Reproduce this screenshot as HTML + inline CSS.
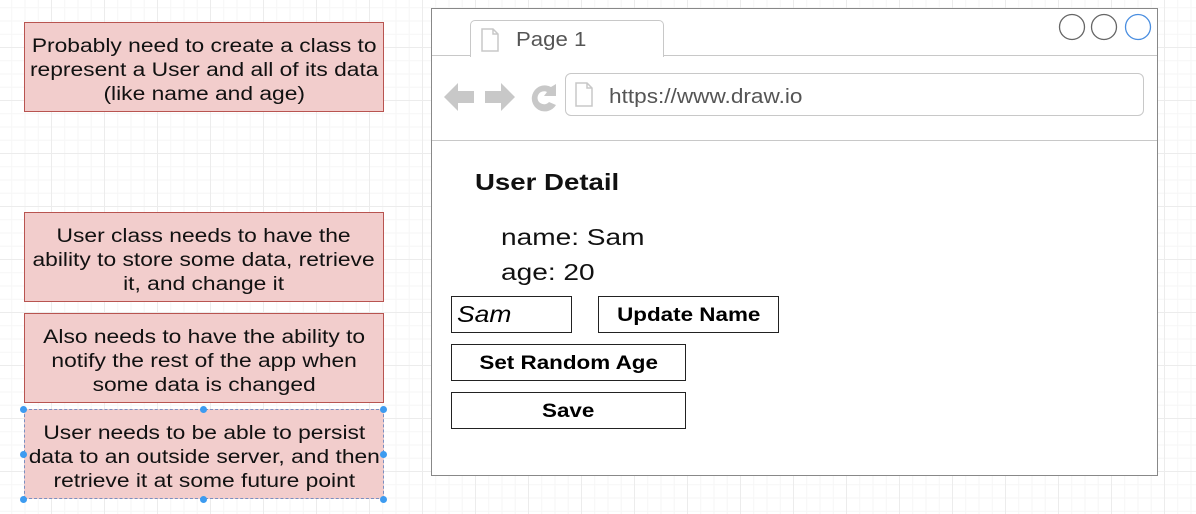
<!DOCTYPE html>
<html><head><style>
body{margin:0;width:1196px;height:514px;overflow:hidden;position:relative;font-family:"Liberation Sans",sans-serif;
background-color:#fff;
background-image:linear-gradient(#ececec 1px,transparent 1px),linear-gradient(90deg,#ececec 1px,transparent 1px),linear-gradient(#f6f6f6 1px,transparent 1px),linear-gradient(90deg,#f6f6f6 1px,transparent 1px);
background-size:53px 53px,53px 53px,13.25px 13.25px,13.25px 13.25px;background-position:0 -6px,-2px 0,0 -6px,-2px 0;}
.n{position:absolute;left:24px;width:358px;background:#f2cdcc;border:1px solid #b85450;display:flex;align-items:center;justify-content:center;text-align:center;font-size:19px;line-height:24px;color:#111;padding-top:8px;box-sizing:content-box;height:80px}
.n span{display:inline-block;transform:scaleX(1.2);white-space:nowrap}
.br{position:absolute;left:431px;top:8px;width:725px;height:466px;background:#fff;border:1px solid #888;}
.a{position:absolute;white-space:nowrap}
.s{transform-origin:0 0;}
.btn{position:absolute;border:1.5px solid #222;box-sizing:border-box;font-weight:bold;font-size:19px;display:flex;align-items:center;justify-content:center;background:#fff;padding-top:3px}
.btn span{display:inline-block;transform:scaleX(1.18)}
.h{position:absolute;width:7px;height:7px;border-radius:50%;background:#3d9bf0;}
</style></head><body>
<div class="n" style="top:22px"><span>Probably need to create a class to<br>represent a User and all of its data<br>(like name and age)</span></div>
<div class="n" style="top:212px"><span>User class needs to have the<br>ability to store some data, retrieve<br>it, and change it</span></div>
<div class="n" style="top:313px"><span>Also needs to have the ability to<br>notify the rest of the app when<br>some data is changed</span></div>
<div class="n" style="top:409px;border:1px dashed #7a8fc0"><span>User needs to be able to persist<br>data to an outside server, and then<br>retrieve it at some future point</span></div>
<div class="h" style="left:20px;top:406px"></div><div class="h" style="left:200px;top:406px"></div><div class="h" style="left:380px;top:406px"></div>
<div class="h" style="left:20px;top:451px"></div><div class="h" style="left:380px;top:451px"></div>
<div class="h" style="left:20px;top:496px"></div><div class="h" style="left:200px;top:496px"></div><div class="h" style="left:380px;top:496px"></div>
<div class="br">
 <div class="a" style="left:0;top:46px;width:725px;height:1px;background:#c8c8c8"></div>
 <div class="a" style="left:38px;top:11px;width:192px;height:36px;border:1px solid #c8c8c8;border-bottom:none;border-radius:5px 5px 0 0;background:#fff"></div>
 <svg class="a" style="left:48px;top:19px" width="20" height="24"><path d="M2 1h11l5 5v17H2z M13 1v5h5" fill="none" stroke="#c8c8c8" stroke-width="1.5"/></svg>
 <div class="a s" style="left:84px;top:20px;font-size:20px;color:#555;transform:scaleX(1.11)">Page 1</div>
 <svg class="a" style="left:625px;top:4px" width="100" height="28"><circle cx="15" cy="14" r="12.5" fill="none" stroke="#666" stroke-width="1.3"/><circle cx="47" cy="14" r="12.5" fill="none" stroke="#666" stroke-width="1.3"/><circle cx="81" cy="14" r="12.5" fill="none" stroke="#4a8ee0" stroke-width="1.3"/></svg>
 <svg class="a" style="left:12px;top:72px" width="115" height="34"><path d="M0 16 L14 2 V10 H30 V22 H14 V30 Z" fill="#c8c8c8"/><path d="M71 16 L57 2 V10 H41 V22 H57 V30 Z" fill="#c8c8c8"/><path d="M107 6 A13 13 0 1 0 112 24 L105 21 A6.5 6.5 0 1 1 103 11 L100 15 H112 V3 Z" fill="#c8c8c8"/></svg>
 <div class="a" style="left:133px;top:64px;width:577px;height:41px;border:1px solid #c8c8c8;border-radius:6px"></div>
 <svg class="a" style="left:142px;top:73px" width="20" height="26"><path d="M2 1h11l5 5v18H2z M13 1v5h5" fill="none" stroke="#c8c8c8" stroke-width="1.5"/></svg>
 <div class="a s" style="left:177px;top:77px;font-size:20px;color:#555;transform:scaleX(1.13)">https://www.draw.io</div>
 <div class="a" style="left:0;top:131px;width:725px;height:1px;background:#c8c8c8"></div>
 <div class="a s" style="left:43px;top:160px;font-size:23px;font-weight:bold;color:#111;transform:scaleX(1.2)">User Detail</div>
 <div class="a s" style="left:69px;top:215px;font-size:23px;color:#111;transform:scaleX(1.22)">name: Sam</div>
 <div class="a s" style="left:69px;top:250px;font-size:23px;color:#111;transform:scaleX(1.22)">age: 20</div>
 <div class="btn" style="left:19px;top:287px;width:121px;height:37px;font-weight:normal;font-style:italic;font-size:23px;justify-content:flex-start;padding-left:5px;padding-top:0"><span style="transform-origin:0 0;transform:scaleX(1.15)">Sam</span></div>
 <div class="btn" style="left:166px;top:287px;width:181px;height:37px"><span>Update Name</span></div>
 <div class="btn" style="left:19px;top:335px;width:235px;height:37px"><span>Set Random Age</span></div>
 <div class="btn" style="left:19px;top:383px;width:235px;height:37px"><span>Save</span></div>
</div>
</body></html>
